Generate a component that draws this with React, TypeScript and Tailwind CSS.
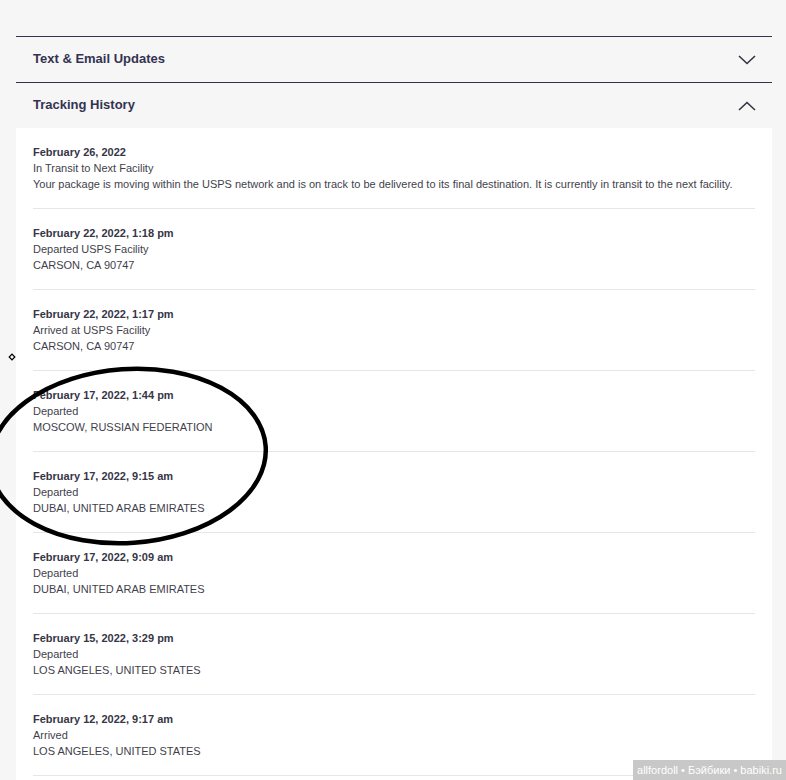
import { ReactNode } from 'react';

const events = [
    {
        date: 'February 26, 2022',
        status: 'In Transit to Next Facility',
        detail: 'Your package is moving within the USPS network and is on track to be delivered to its final destination. It is currently in transit to the next facility.',
    },
    { date: 'February 22, 2022, 1:18 pm', status: 'Departed USPS Facility', detail: 'CARSON, CA 90747' },
    { date: 'February 22, 2022, 1:17 pm', status: 'Arrived at USPS Facility', detail: 'CARSON, CA 90747' },
    { date: 'February 17, 2022, 1:44 pm', status: 'Departed', detail: 'MOSCOW, RUSSIAN FEDERATION' },
    { date: 'February 17, 2022, 9:15 am', status: 'Departed', detail: 'DUBAI, UNITED ARAB EMIRATES' },
    { date: 'February 17, 2022, 9:09 am', status: 'Departed', detail: 'DUBAI, UNITED ARAB EMIRATES' },
    { date: 'February 15, 2022, 3:29 pm', status: 'Departed', detail: 'LOS ANGELES, UNITED STATES' },
    { date: 'February 12, 2022, 9:17 am', status: 'Arrived', detail: 'LOS ANGELES, UNITED STATES' },
];

function Chevron({ up }: { up?: boolean }) {
    return (
        <svg width="18" height="10" viewBox="0 0 18 10" fill="none" className="mr-[16px]">
            <path
                d={up ? 'M1 9 L9 1.5 L17 9' : 'M1 1 L9 8.5 L17 1'}
                stroke="#333344"
                strokeWidth="1.6"
            />
        </svg>
    );
}

function SectionHeader({ children, up }: { children: ReactNode; up?: boolean }) {
    return (
        <div className="flex h-[46px] items-center justify-between border-t border-[#333350] pl-[17px]">
            <span className="pb-px text-[13px] font-bold text-[#333350]">{children}</span>
            <Chevron up={up} />
        </div>
    );
}

export default function App() {
    return (
        <div
            className="relative h-[780px] w-[786px] overflow-hidden bg-[#f6f6f7]"
            style={{ fontFamily: '"Liberation Sans", Arial, sans-serif' }}
        >
            <div className="ml-[16px] mr-[14px] pt-[36px]">
                <SectionHeader>Text &amp; Email Updates</SectionHeader>
                <SectionHeader up>Tracking History</SectionHeader>
                <div className="min-h-[700px] bg-white px-[17px]">
                    {events.map((e) => (
                        <div
                            key={e.date}
                            className="border-b border-[#e6e6e8] pb-[16px] pt-[16px] text-[11px] leading-[16px] text-[#3f3f4c]"
                        >
                            <p className="font-bold text-[#363646]">{e.date}</p>
                            <p>{e.status}</p>
                            <p>{e.detail}</p>
                        </div>
                    ))}
                </div>
            </div>

            {/* hand-drawn annotation */}
            <svg className="pointer-events-none absolute left-0 top-0" width="786" height="780">
                <ellipse
                    cx="128"
                    cy="456"
                    rx="138"
                    ry="87"
                    fill="none"
                    stroke="#000"
                    strokeWidth="4.5"
                    transform="rotate(-4 128 456)"
                />
                <rect x="10" y="355" width="4" height="4" fill="none" stroke="#000" strokeWidth="1.2" transform="rotate(45 12 357)" />
            </svg>

            <div className="absolute bottom-0 right-0 flex h-[20px] w-[153px] items-center justify-center bg-[#c8c8c8] text-[11px] text-white">
                allfordoll • Бэйбики • babiki.ru
            </div>
        </div>
    );
}
